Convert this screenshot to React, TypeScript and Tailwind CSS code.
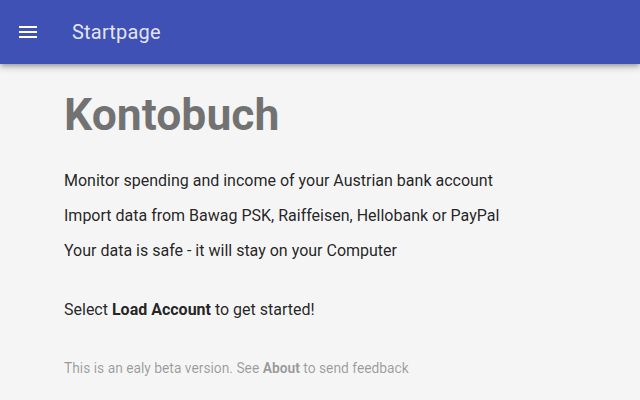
import React from "react";

export default function App() {
  return (
    <div className="min-h-[400px] w-full bg-[#f5f5f5] font-['Roboto',sans-serif]">
      <header className="relative z-10 flex h-16 items-center bg-[#3f51b5] pl-4 shadow-[0_2px_4px_-1px_rgba(0,0,0,0.2),0_4px_5px_0_rgba(0,0,0,0.14),0_1px_10px_0_rgba(0,0,0,0.12)]">
        <svg width="24" height="24" viewBox="0 0 24 24" fill="#fff" className="shrink-0">
          <path d="M3 18h18v-2H3v2zm0-5h18v-2H3v2zm0-7v2h18V6H3z" />
        </svg>
        <div className="ml-8 text-[20px] leading-none tracking-[0.2px] text-white/[0.87]">Startpage</div>
      </header>
      <main className="px-16">
        <h1 className="m-0 pt-[27px] text-[44.5px] font-bold leading-[48px] text-black/[0.54]">Kontobuch</h1>
        <div className="mt-[30px] flex flex-col gap-[11px] text-[16px] leading-6 text-black/[0.87]">
          <p>Monitor spending and income of your Austrian bank account</p>
          <p>Import data from Bawag PSK, Raiffeisen, Hellobank or PayPal</p>
          <p>Your data is safe - it will stay on your Computer</p>
          <p className="mt-6">
            Select <b className="font-bold">Load Account</b> to get started!
          </p>
        </div>
        <p className="mt-[36px] text-[13.8px] leading-5 text-black/[0.38]">
          This is an ealy beta version. See <b className="font-bold">About</b> to send feedback
        </p>
      </main>
    </div>
  );
}
